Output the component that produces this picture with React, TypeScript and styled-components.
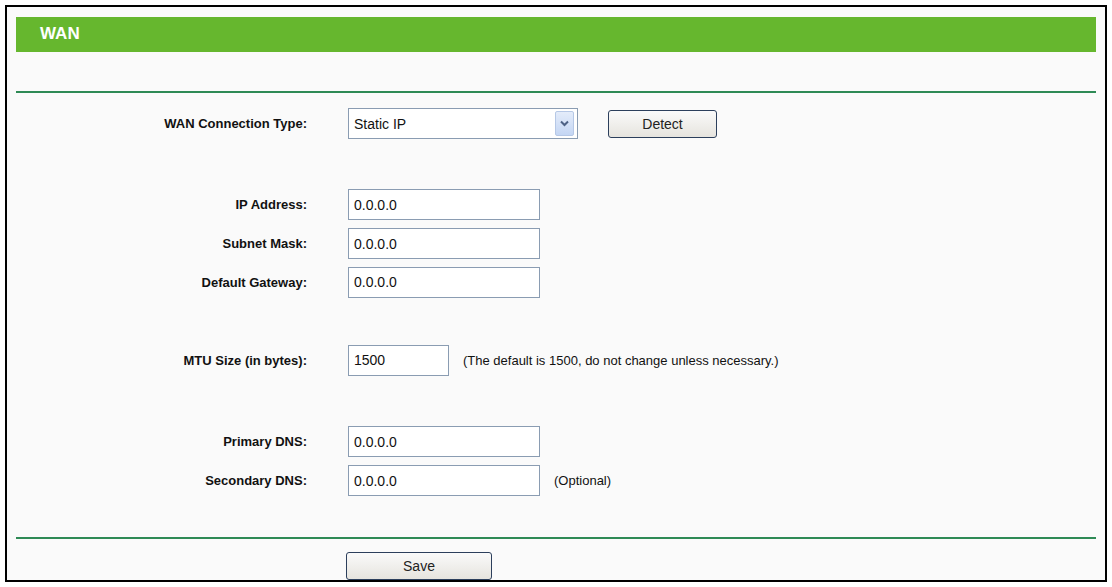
import styled, { createGlobalStyle } from 'styled-components';

const Global = createGlobalStyle`
  body { margin: 0; background: #fff; font-family: "Liberation Sans", Arial, sans-serif; }
`;

const Frame = styled.div`
  margin: 5px;
  width: 1102px;
  height: 577px;
  box-sizing: border-box;
  border: 2px solid #000;
  background: #fafafa;
  padding: 10px 9px 0 9px;
  display: flex;
  flex-direction: column;
`;

const TitleBar = styled.div`
  height: 35px;
  background: #66b72e;
  color: #fff;
  font-weight: bold;
  font-size: 17px;
  padding-left: 24px;
  display: flex;
  align-items: center;
`;

const Rule = styled.div<{ $top: number }>`
  margin-top: ${(p) => p.$top}px;
  height: 2px;
  background: #2e8a55;
`;

const Row = styled.div<{ $h: number }>`
  height: ${(p) => p.$h}px;
  display: flex;
  align-items: center;
`;

const Label = styled.div`
  width: 291px;
  text-align: right;
  font-weight: bold;
  font-size: 13px;
  color: #111;
  margin-right: 41px;
`;

const TextBox = styled.div<{ $w: number }>`
  width: ${(p) => p.$w}px;
  height: 31px;
  box-sizing: border-box;
  border: 1px solid #8a9cb2;
  background: #fff;
  font-size: 14px;
  padding-left: 5px;
  display: flex;
  align-items: center;
  color: #111;
`;

const Select = styled(TextBox)`
  justify-content: space-between;
  padding-right: 3px;
`;

const Arrow = styled.div`
  width: 17px;
  height: 23px;
  border: 1px solid #b6c8e6;
  border-radius: 2px;
  background: linear-gradient(#e4ecfa, #c4d6f4);
  display: flex;
  align-items: center;
  justify-content: center;
`;

const Button = styled.div<{ $w: number }>`
  width: ${(p) => p.$w}px;
  height: 28px;
  box-sizing: border-box;
  border: 1px solid #2c3f5c;
  border-radius: 3px;
  background: linear-gradient(#fafafa, #e6e4de);
  font-size: 14px;
  color: #222;
  display: flex;
  align-items: center;
  justify-content: center;
`;

const Note = styled.span`
  font-size: 13px;
  color: #111;
  margin-left: 14px;
`;

const SaveRow = styled.div`
  padding: 13px 0 0 330px;
`;

const Field = ({ label, value, w = 192, note }: { label: string; value: string; w?: number; note?: string }) => (
  <Row $h={39}>
    <Label>{label}</Label>
    <TextBox $w={w}>{value}</TextBox>
    {note && <Note>{note}</Note>}
  </Row>
);

export default function App() {
  return (
    <>
      <Global />
      <Frame>
        <TitleBar>WAN</TitleBar>
        <Rule $top={39} />
        <Row $h={62}>
          <Label>WAN Connection Type:</Label>
          <Select $w={230}>
            Static IP
            <Arrow>
              <svg width="9" height="7" viewBox="0 0 9 7">
                <path d="M1 1.5 L4.5 5 L8 1.5" stroke="#4d6185" strokeWidth="2" fill="none" />
              </svg>
            </Arrow>
          </Select>
          <Button $w={109} style={{ marginLeft: 30 }}>Detect</Button>
        </Row>
        <Row $h={31} />
        <Field label="IP Address:" value="0.0.0.0" />
        <Field label="Subnet Mask:" value="0.0.0.0" />
        <Field label="Default Gateway:" value="0.0.0.0" />
        <Row $h={39} />
        <Field label="MTU Size (in bytes):" value="1500" w={101} note="(The default is 1500, do not change unless necessary.)" />
        <Row $h={43} />
        <Field label="Primary DNS:" value="0.0.0.0" />
        <Field label="Secondary DNS:" value="0.0.0.0" note="(Optional)" />
        <Rule $top={37} />
        <SaveRow>
          <Button $w={146}>Save</Button>
        </SaveRow>
      </Frame>
    </>
  );
}
